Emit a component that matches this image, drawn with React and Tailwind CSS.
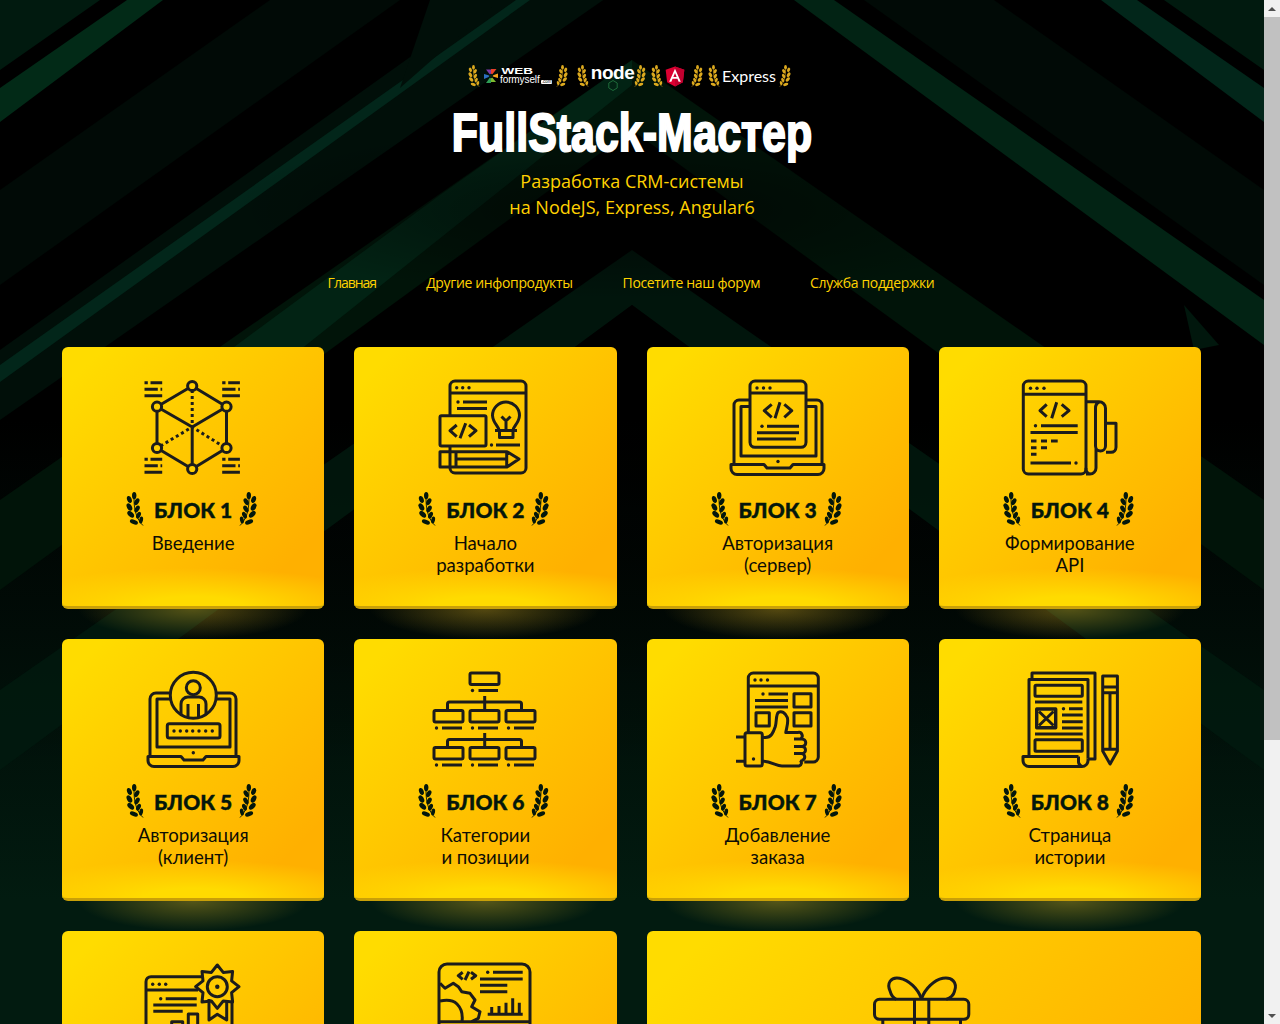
const INK = '#1c1c1c';

const Laurel = ({ fill = '#04170c', flip = false, className = '' }) => (
  <svg viewBox="0 0 17 34" className={className} style={flip ? { transform: 'scaleX(-1)' } : undefined}>
    <path d="M16.500 33.500C11 28 7.500 20 7.500 7" fill="none" stroke={fill} strokeWidth="0.9" />
    <g fill={fill}>
      <ellipse cx="7.700" cy="3.600" rx="2.200" ry="3.600" />
      <ellipse cx="2.900" cy="7.500" rx="2.300" ry="3.600" transform="rotate(-20 2.900 7.500)" />
      <ellipse cx="10.300" cy="9.700" rx="2.200" ry="3.700" transform="rotate(30 10.300 9.700)" />
      <ellipse cx="2.900" cy="15" rx="2.400" ry="4" transform="rotate(-28 2.900 15)" />
      <ellipse cx="10.600" cy="17" rx="2.200" ry="3.700" transform="rotate(30 10.600 17)" />
      <ellipse cx="4.200" cy="22.300" rx="2.400" ry="4.100" transform="rotate(-45 4.200 22.300)" />
      <ellipse cx="12" cy="23.200" rx="2.100" ry="3.600" transform="rotate(25 12 23.200)" />
      <ellipse cx="7.400" cy="30" rx="2.200" ry="4.200" transform="rotate(-70 7.400 30)" />
      <ellipse cx="14.600" cy="28" rx="1.900" ry="3.500" transform="rotate(12 14.600 28)" />
    </g>
  </svg>
);

const IconFrame = ({ box = '0 0 150 115', children }) => (
  <svg
    viewBox={box}
    className="w-[150px] h-[115px] mx-auto"
    fill="none"
    stroke={INK}
    strokeWidth="3"
    strokeLinejoin="round"
  >
    {children}
  </svg>
);

const Dots = ({ points, r = 1.700 }) => (
  <g fill={INK} stroke="none">
    {points.map(([x, y]) => (
      <circle key={`${x}-${y}`} cx={x} cy={y} r={r} />
    ))}
  </g>
);

const Dashes = () => (
  <g>
    <path d="M144 382.700h3.300M150 382.700h11.700M144 389.300h13.300M160 389.300h1.700M144 395.700h17.700" />
  </g>
);

const CubeIcon = () => (
  <IconFrame box="117.500 370 150 115">
    <Dashes />
    <g transform="translate(77.700 0)"><Dashes /></g>
    <g transform="translate(0 76.500)"><Dashes /></g>
    <g transform="translate(77.700 76.500)"><Dashes /></g>
    <path d="M191.700 386L226 406.700V448L191.700 469L156.500 448V406.700ZM156.500 406.700L191.700 427L226 406.700M191.700 427V469" />
    <path d="M191.700 390V427M160 446L191.700 427L222 446" strokeDasharray="3 3" />
    <g fill="#ffce00">
      <circle cx="191.700" cy="386" r="4.600" />
      <circle cx="156.500" cy="406.700" r="4.600" />
      <circle cx="226" cy="406.700" r="4.600" />
      <circle cx="156.500" cy="448" r="4.600" />
      <circle cx="226" cy="448" r="4.600" />
      <circle cx="191.700" cy="469" r="4.600" />
    </g>
  </IconFrame>
);

const IdeaIcon = () => (
  <IconFrame box="10 0 150 115">
    <path d="M50 45V16a5 5 0 0 1 5-5h66a5 5 0 0 1 5 5v82a5 5 0 0 1-5 5H55a5 5 0 0 1-5-5v-1M50 76v5.700M50 23h76" />
    <Dots points={[[56.700, 17.700], [62.700, 17.700], [69, 17.700], [58, 32], [91.500, 75]]} />
    <path d="M63 32h24M57 38.500h30M96 75h24" />
    <path d="M99 60.500c0-4-6-7-6.500-15a13.500 13.500 0 0 1 27 0c-.5 8-6.500 11-6.500 15M95 60.500h22M99.500 60.500v7h13.500v-7M101.500 46.500l4.500 4.500 4.500-4.500M106 51v9.500" />
    <rect x="40" y="45.700" width="46" height="30.300" rx="1.500" />
    <path d="M56.700 55L50 60.700l6.700 6M65.700 53.300L60 68.300M69 55l7 5.700-7 6" />
    <path d="M40 81.700h67L119 89l-12 8H40zM50 81.700V97M56 81.700V97M106.700 81.700V97M56 89h50" />
  </IconFrame>
);

const LaptopCodeIcon = () => (
  <IconFrame box="3 0 150 115">
    <rect x="50" y="11" width="56" height="66.300" rx="5" />
    <path d="M50 23h56" />
    <Dots points={[[57, 18], [63.500, 18], [70, 18], [62, 56.300]]} />
    <path d="M71.700 34.300l-7.400 6.400 7.400 6.600M80 32.300l-5 16M84.300 34.300l7.400 6.400-7.400 6.600M67 56.300h32M57 62.700h42M57 69h39" />
    <path d="M50 30H39a5 5 0 0 0-5 5v59.500M106 30h11a5 5 0 0 1 5 5v59.500M50 36.500h-9V86h75V36.500h-10" />
    <Dots points={[[78, 91.500]]} r={1.700} />
    <path d="M31 94.500h33l3 3.500h23l3-3.500h31v4a6 6 0 0 1-6 6H37a6 6 0 0 1-6-6z" />
  </IconFrame>
);

const ApiIcon = () => (
  <IconFrame box="-5 0 150 115">
    <rect x="23.300" y="11" width="62.700" height="93" rx="5" />
    <path d="M23.300 24.300H86" />
    <Dots points={[[30.500, 18.300], [37, 18.300], [44, 18.300], [35.500, 55.700], [76, 93]]} />
    <path d="M46.700 34.300L40 40.700l6.700 6M56.700 32.300l-5 16M61.700 34.300l7.300 6.400-7.300 6M41 55.700h36.700M30.500 62.500h47.200M31 71h5.500M41 71h6M51 71h6.700M31 77.700h5.500M41 77.700h6M31 84.300h5.500M30.500 93H71" />
    <path d="M86 31.700h13a6.500 6.500 0 0 1 6.500 6.500V76a5 5 0 0 1-10 0V38.200a6.500 6.500 0 0 1 3.500-6M96 78v20a6 6 0 0 1-6 6h-4M86 98a5 5 0 0 0 5 6M105.500 53.300h10.500v24a5 5 0 0 1-5 5h-5" />
  </IconFrame>
);

const LaptopUserIcon = () => (
  <IconFrame box="-2 0 150 115">
    <circle cx="73.300" cy="33.300" r="23" />
    <circle cx="73.300" cy="25.700" r="7" />
    <path d="M61 53V42a7 7 0 0 1 7-7h11a7 7 0 0 1 7 7v11M68 42v14M78.500 42v14" />
    <path d="M50 31H36a6 6 0 0 0-6 6v58M96 31h14a6 6 0 0 1 6 6v58M50 37H37v48h73V37H96" />
    <rect x="47.300" y="61.700" width="52.700" height="14.300" rx="2" />
    <Dots points={[[54, 69], [60.300, 69], [66.700, 69], [72.700, 69], [79, 69], [85.700, 69], [92.300, 69]]} />
    <Dots points={[[73.300, 90.700]]} />
    <path d="M28 94.500h33l3 3.500h19l3-3.500h33v4a6 6 0 0 1-6 6H34a6 6 0 0 1-6-6z" />
  </IconFrame>
);

const TreeIcon = () => {
  const cols = [24, 60, 96];
  return (
    <IconFrame box="0 0 150 115">
      <rect x="60" y="11" width="29" height="11.500" rx="1.500" />
      <path d="M68.500 28.500H88" />
      <Dots points={[[62.500, 28.500]]} />
      <path d="M74.700 34v14M37.500 48v-6a2 2 0 0 1 2-2h70a2 2 0 0 1 2 2v6M74.700 71v14M37.500 85.500v-6a2 2 0 0 1 2-2h70a2 2 0 0 1 2 2v6" />
      {[48.500, 85.500].map((y) =>
        cols.map((x) => (
          <g key={`${x}-${y}`}>
            <rect x={x} y={y} width="29" height="11.500" rx="1.500" />
            <path d={`M${x + 8} ${y + 17.500}h20`} />
            <Dots points={[[x + 2.500, y + 17.500]]} />
          </g>
        ))
      )}
    </IconFrame>
  );
};

const ThumbIcon = () => (
  <IconFrame box="-7 0 150 115">
    <path d="M38.300 70V16a5 5 0 0 1 5-5h60a5 5 0 0 1 5 5v79a5 5 0 0 1-5 5h-9M38.300 24h70" />
    <Dots points={[[45, 18], [51, 18], [57.500, 18], [53, 32], [43.500, 97]]} />
    <path d="M58.500 32H78M45 38.500h33M45 45h33" />
    <rect x="84" y="31.700" width="17" height="13.300" />
    <rect x="84" y="50.700" width="17" height="13.300" />
    <rect x="46" y="50.700" width="13.300" height="13.300" />
    <rect x="35" y="70.700" width="17.300" height="33.300" rx="2" />
    <path d="M26 75h9M26 99.300h9" />
    <path d="M52.300 75.500h3c6 0 8-5 10-11 1.500-5 .5-12 3-14 3-2 7 0 9 5 1.500 5-1 11-1.500 15h12a3.500 3.500 0 0 1 2.500 6.500M84 77h8a3.500 3.500 0 0 1 0 7.500M84 84.500h8a3.500 3.500 0 0 1 0 7M84 91.500h7a3.500 3.500 0 0 1 .5 7M90 98.500a3 3 0 0 1-1 5.500H72c-6 0-9-4-19.700-5" />
  </IconFrame>
);

const PaperIcon = () => (
  <IconFrame box="-5 0 150 115">
    <path d="M32 17v-6h63v86h-7M29 94.500V17.500h59v79" />
    <rect x="35" y="23.300" width="47.300" height="11" rx="1" />
    <path d="M35 40h47.300M69 46.700h13.700M62 53h20.700M62 59.700h20.700M62 66h20.700M35 72h47.700" />
    <Dots points={[[63.500, 46.700]]} />
    <rect x="36.700" y="47" width="19" height="18.700" strokeWidth="3.400" />
    <path d="M39 49.500l14.500 14M53.500 49.500L39 63.500" />
    <rect x="35" y="77.700" width="47.300" height="11.600" rx="1" />
    <path d="M78.500 94.500H23v4a6 6 0 0 0 6 6h53a6 6 0 0 0 6-6v-2M78.500 94.500v4a6 6 0 0 0 3.500 6" />
    <path d="M102.700 14h14.700v75l-7.300 13-7.400-13zM102.700 25h14.700M102.700 30.700h14.700M110 31v56M102.700 87.300h14.700" />
  </IconFrame>
);

const CertificateIcon = () => {
  // восьмиконечная звезда медали
  const star = Array.from({ length: 16 }, (_, i) => {
    const a = (i * Math.PI) / 8 - Math.PI / 2;
    const r = i % 2 === 0 ? 21.700 : 15.500;
    return `${(99.300 + r * Math.cos(a)).toFixed(1)},${(32.700 + r * Math.sin(a)).toFixed(1)}`;
  }).join(' ');
  return (
    <IconFrame>
      <path d="M84 22.700H33a5 5 0 0 0-5 5V110h86V46M28 36h52" />
      <Dots points={[[34.700, 30.300], [41.300, 30.300], [47.700, 30.300], [42.700, 44.700]]} />
      <path d="M47.700 44.700h31M35.300 51h43.400M35.300 57.300h29.400" />
      <path d="M70.300 102V60h9.400v42M53.700 102V67.700h11V102" />
      <polygon points={star} fill="#ffcb00" />
      <circle cx="99.300" cy="32.700" r="10" />
      <Dots points={[[99.300, 32.700]]} r={2.200} />
      <path d="M91 45v21l8.300-5.700 9.400 5.700V46" />
    </IconFrame>
  );
};

const MonitorIcon = () => (
  <IconFrame>
    <path d="M29 67.700V18a8 8 0 0 1 8-8h75a8 8 0 0 1 8 8v50M29 67.700h91M29 67.700v20a6 6 0 0 0 6 6h79a6 6 0 0 0 6-6v-20" />
    <path d="M52.700 18.300l-4.400 3.400 4.400 3.600M59 17.700L55 26M61 18.300l4.700 3.400-4.700 3.600M83 18.300h29.700M70 25h42.700M70 31.300h27.300M70 37.700h27.300M77.700 60.300h35M81.700 60v-7M89 60v-8M96 60V48.700M102.700 60V44.300M109.300 60V48.700" />
    <Dots points={[[77.700, 18.300]]} />
    <path d="M30 29.300l5 5 8.300-5 5 3.400 3.400 5 8.300 1.600 5 6.700-3.300 6.700 8.300 5-1.700 6.600-6.600 3.400" />
    <path d="M30 47c7-1.500 13-1 17 3s6 10 5 17.700" />
  </IconFrame>
);

const GiftIcon = () => (
  <IconFrame>
    <rect x="25.500" y="45.300" width="94.300" height="20" rx="5" />
    <path d="M65.500 45.300V104M79.800 45.300V104M33.800 65.300V100M111.500 65.300V100" />
    <path d="M72.200 44.300C69 35 60 26 50.500 24.300c-9-1.500-13 5-9.300 13 1 4 3 6.500 6 8" />
    <path d="M72.700 44.300C76 35 85 26 93.800 24.300c9-1.500 15 4 11.700 13-1 4-4 6.500-8.300 8" />
  </IconFrame>
);

const cards = [
  { title: 'БЛОК 1', lines: ['Введение'], Icon: CubeIcon },
  { title: 'БЛОК 2', lines: ['Начало', 'разработки'], Icon: IdeaIcon },
  { title: 'БЛОК 3', lines: ['Авторизация', '(сервер)'], Icon: LaptopCodeIcon },
  { title: 'БЛОК 4', lines: ['Формирование', 'API'], Icon: ApiIcon },
  { title: 'БЛОК 5', lines: ['Авторизация', '(клиент)'], Icon: LaptopUserIcon },
  { title: 'БЛОК 6', lines: ['Категории', 'и позиции'], Icon: TreeIcon },
  { title: 'БЛОК 7', lines: ['Добавление', 'заказа'], Icon: ThumbIcon },
  { title: 'БЛОК 8', lines: ['Страница', 'истории'], Icon: PaperIcon },
  { Icon: CertificateIcon },
  { Icon: MonitorIcon },
  { Icon: GiftIcon, wide: true },
];

const Card = ({ title, lines = [], Icon, wide }) => (
  <a
    href="#"
    className={`relative block h-[262px] rounded-md border-b-[3px] border-[#c9a008] bg-[linear-gradient(135deg,#ffdc00_8%,#ffb000_85%)] pt-[23px] text-center ${wide ? 'col-span-2' : ''}`}
  >
    <div className="absolute inset-x-0 bottom-0 h-[38px] bg-[radial-gradient(ellipse_75%_100%_at_50%_100%,#ffdb00_25%,rgba(255,219,0,0)_100%)]" />
    <div className="absolute -bottom-[33px] left-1/2 h-[30px] w-[230px] -translate-x-1/2 bg-[radial-gradient(ellipse_50%_100%_at_50%_0%,rgba(255,205,40,0.33),rgba(255,205,40,0))]" />
    <div className="relative">
      <Icon />
      {title && (
        <>
          <div className="mt-[7px] flex h-[34px] items-center justify-center pr-[3px]">
            <Laurel className="h-[34px] w-[18px]" />
            <span className="mr-[7px] ml-[10px] text-[21px] leading-none font-black text-[#04170c] [-webkit-text-stroke:0.4px_#04170c]">{title}</span>
            <Laurel className="h-[34px] w-[18px]" flip />
          </div>
          <div className="mt-[6px] text-[18.600px] leading-[22px] text-[#0d0d05]">
            {lines.map((line) => (
              <div key={line}>{line}</div>
            ))}
          </div>
        </>
      )}
    </div>
  </a>
);

const Backdrop = () => (
  <svg className="absolute left-0 top-0 h-[1000px] w-[1264px]" viewBox="0 0 1264 1000" preserveAspectRatio="none">
    <defs>
      <linearGradient id="fade" x1="0" y1="0" x2="0" y2="1">
        <stop offset="0" stopColor="#000" />
        <stop offset="0.42" stopColor="#000" />
        <stop offset="0.9" stopColor="#021b10" />
      </linearGradient>
      <linearGradient id="sink" x1="0" y1="0" x2="0" y2="1">
        <stop offset="0" stopColor="#000" />
        <stop offset="1" stopColor="#000" stopOpacity="0" />
      </linearGradient>
      <radialGradient id="hush" cx="0.5" cy="0.5" r="0.5">
        <stop offset="0" stopColor="#000" stopOpacity="0.6" />
        <stop offset="1" stopColor="#000" stopOpacity="0" />
      </radialGradient>
    </defs>
    <rect width="1264" height="1000" fill="url(#fade)" />
    <polygon points="0,0 100,0 0,70" fill="#011a0f" />
    <polygon points="127,0 163,0 0,122 0,88" fill="#022a17" />
    <polygon points="0,190 270,0 400,0 0,285" fill="#010a06" />
    <polygon points="0,350 490,0 530,0 632,-60 632,-20 0,420" fill="#010f09" />
    <polygon points="0,365 516,0 530,0 0,382" fill="#02261a" />
    <polygon points="0,500 632,60 632,130 0,590" fill="#011409" />
    <polygon points="230,350 440,195 632,60 632,85 300,350" fill="#022314" />
    <polygon points="430,0 500,0 400,88" fill="#010f09" />
    <g transform="translate(1264 0) scale(-1 1)">
      <polygon points="0,0 100,0 0,70" fill="#011a0f" />
      <polygon points="127,0 163,0 0,122 0,88" fill="#02261a" />
      <polygon points="0,190 270,0 400,0 0,285" fill="#010a06" />
      <polygon points="0,300 430,0 470,0 0,345" fill="#022314" />
      <polygon points="0,500 632,60 632,130 0,590" fill="#011409" />
      <polygon points="45,345 80,305 70,350" fill="#01170d" />
    </g>
    <polygon points="632,250 1264,690 1264,770 632,305 0,770 0,690" fill="#011a0f" opacity="0.8" />
    <polygon points="632,305 1264,770 0,770" fill="url(#sink)" opacity="0.85" />
    <rect x="230" y="120" width="804" height="180" fill="url(#hush)" />
  </svg>
);

const WebFormyself = () => (
  <div className="ml-[3px] flex items-center">
    <svg viewBox="0 0 16 16" className="h-[16px] w-[16px]">
      <path d="M8 8L3 1.500h5z" fill="#7c3aa8" />
      <path d="M8 8V1h5.500z" fill="#e8412a" />
      <path d="M8 8l7-2.500V10z" fill="#f4a21d" />
      <path d="M8 8l5 6H8z" fill="#7dbb2f" />
      <path d="M8 8v7H3z" fill="#2f9e56" />
      <path d="M8 8l-7 3V6z" fill="#2b6fc0" />
      <circle cx="8" cy="8" r="2.200" fill="#0a1c12" />
    </svg>
    <div className="ml-[1px] flex w-[53px] flex-col text-left font-['Liberation_Sans',sans-serif] text-white">
      <span className="origin-left scale-x-[1.5] pl-[1px] text-[9px] leading-[8px] font-bold">WEB</span>
      <span className="text-[10px] leading-[10px] tracking-[-0.1px] whitespace-nowrap">
        formyself
        <span className="ml-[1px] inline-block rounded-[1px] bg-white px-[1px] align-baseline text-[4.500px] leading-[4px] tracking-normal text-black">.com</span>
      </span>
    </div>
  </div>
);

const NodeLogo = () => (
  <div className="relative ml-[2px] flex h-[24px] w-[43px] items-start justify-center">
    <span className="font-['Liberation_Sans',sans-serif] text-[19px] leading-[18px] font-bold tracking-[-0.5px] text-white">node</span>
    <svg viewBox="0 0 10 11" className="absolute bottom-[-3px] left-[17px] h-[11px] w-[10px]">
      <path d="M5 .5l4.200 2.500v5L5 10.500.8 8V3z" fill="none" stroke="#1f6b3a" />
    </svg>
  </div>
);

const AngularLogo = () => (
  <svg viewBox="25 25 200 210" className="ml-[2px] h-[21px] w-[20px]">
    <polygon points="125,30 31.900,63.200 46.100,186.300 125,230 203.900,186.300 218.100,63.200" fill="#dd0031" />
    <polygon points="125,30 125,230 203.900,186.300 218.100,63.200" fill="#c3002f" />
    <path d="M125 52.100L66.800 182.600h21.700l11.700-29.200h49.400l11.700 29.200h21.700L125 52.100zM142 135.400h-34l17-40.900z" fill="#fff" />
  </svg>
);

const Stack = () => (
  <div className="flex h-[26px] items-center justify-center pr-[5px]">
    <Laurel fill="#dca91e" className="h-[22px] w-[12px]" />
    <WebFormyself />
    <Laurel fill="#dca91e" flip className="ml-[3px] h-[22px] w-[12px]" />
    <Laurel fill="#dca91e" className="ml-[9px] h-[22px] w-[12px]" />
    <NodeLogo />
    <Laurel fill="#dca91e" flip className="h-[22px] w-[12px]" />
    <Laurel fill="#dca91e" className="ml-[5px] h-[22px] w-[12px]" />
    <AngularLogo />
    <Laurel fill="#dca91e" flip className="ml-[6px] h-[22px] w-[12px]" />
    <Laurel fill="#dca91e" className="ml-[5px] h-[22px] w-[12px]" />
    <span className="ml-[2px] font-['Lato',sans-serif] text-[16px] leading-none text-white">Express</span>
    <Laurel fill="#dca91e" flip className="ml-[3px] h-[22px] w-[12px]" />
  </div>
);

const Scrollbar = () => (
  <aside className="flex h-screen w-4 flex-col items-center bg-[#f1f1f1]">
    <div className="flex h-[17px] w-full items-center justify-center">
      <div className="h-0 w-0 border-x-[4px] border-b-[4px] border-x-transparent border-b-[#505050]" />
    </div>
    <div className="h-[723px] w-full bg-[#c1c1c1]" />
    <div className="flex-1" />
    <div className="flex h-[17px] w-full items-center justify-center">
      <div className="h-0 w-0 border-x-[4px] border-t-[4px] border-x-transparent border-t-[#505050]" />
    </div>
  </aside>
);

export default function App() {
  return (
    <div className="flex h-screen overflow-hidden bg-[#021b10] font-['Lato',sans-serif]">
      <main className="relative flex-1 overflow-hidden">
        <Backdrop />
        <div className="relative">
          <header className="pt-[63px] text-center">
            <Stack />
            <h1 className="mt-[15px] h-[57px] scale-x-[0.81] font-['Liberation_Sans',sans-serif] text-[53px] leading-[57px] font-bold text-white [-webkit-text-stroke:2px_white]">
              FullStack-Мастер
            </h1>
            <p className="mt-[7px] font-['Open_Sans',sans-serif] text-[18px] leading-[26px] text-[#ffd200]">
              Разработка CRM-системы
              <br />
              на NodeJS, Express, Angular6
            </p>
          </header>
          <nav className="mt-[50px] flex h-[24px] items-center justify-center gap-[50px] pr-[2px] font-['Open_Sans',sans-serif] text-[14px] tracking-[-0.35px] text-[#ffd200]">
            <a href="#" className="tracking-[-1px]">Главная</a>
            <a href="#">Другие инфопродукты</a>
            <a href="#">Посетите наш форум</a>
            <a href="#">Служба поддержки</a>
          </nav>
          <section className="mt-[53px] ml-[62px] grid w-[1139px] grid-cols-4 gap-[30px]">
            {cards.map((card, i) => (
              <Card key={i} {...card} />
            ))}
          </section>
        </div>
      </main>
      <Scrollbar />
    </div>
  );
}
